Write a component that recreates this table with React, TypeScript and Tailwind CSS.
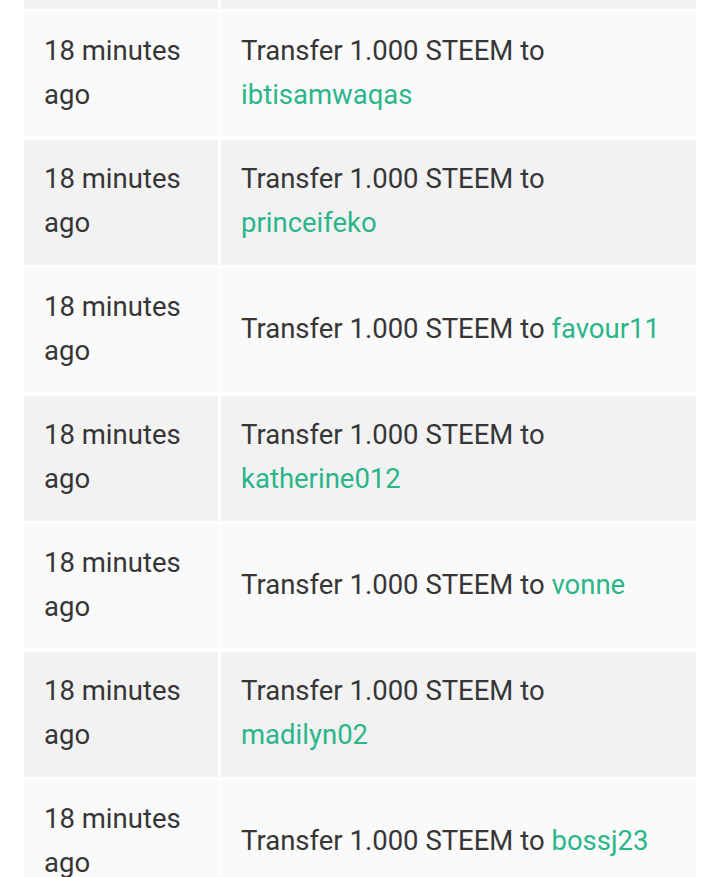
import React from "react";

const rows: { user: string }[] = [
  { user: "ibtisamwaqas" },
  { user: "princeifeko" },
  { user: "favour11" },
  { user: "katherine012" },
  { user: "vonne" },
  { user: "madilyn02" },
  { user: "bossj23" },
];

export default function App() {
  return (
    <div
      className="w-[719px] h-[877px] overflow-hidden bg-white"
      style={{ fontFamily: "Roboto, 'Noto Sans', sans-serif" }}
    >
      <div className="flex flex-col gap-[3px] pl-[24px] pr-[23px]">
        <div className="grid grid-cols-[194px_1fr] gap-[3px] h-[9px]">
          <div className="bg-[#f2f2f2]" />
          <div className="bg-[#f2f2f2]" />
        </div>
        {rows.map((r, i) => {
          const bg = i % 2 === 0 ? "bg-[#fafafa]" : "bg-[#f2f2f2]";
          return (
            <div key={i} className="grid grid-cols-[194px_1fr] gap-[3px] h-[125px]">
              <div className={`${bg} flex items-center pl-[20px] pr-[8px] pb-[4px]`}>
                <div className="text-[27.5px] leading-[44px] text-[#363636]">18 minutes ago</div>
              </div>
              <div className={`${bg} flex items-center pl-[20px] pr-[30px] pb-[4px]`}>
                <div className="text-[27.5px] leading-[44px] text-[#363636]">
                  Transfer 1.000 STEEM to <span className="text-[#2bb68a]">{r.user}</span>
                </div>
              </div>
            </div>
          );
        })}
      </div>
    </div>
  );
}
